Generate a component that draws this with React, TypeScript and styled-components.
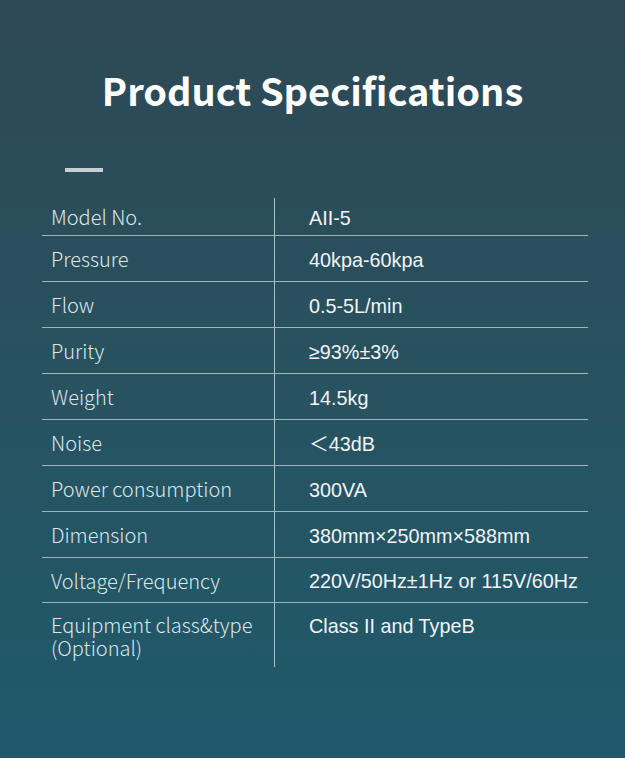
import React from "react";
import styled, { createGlobalStyle } from "styled-components";

const GlobalStyle = createGlobalStyle`
  html, body {
    margin: 0;
    padding: 0;
  }
  body {
    background: #1f5a6c;
  }
`;

const Page = styled.div`
  min-height: 758px;
  box-sizing: border-box;
  padding: 66px 0 0;
  background: linear-gradient(180deg, #2e4855 0%, #28525f 50%, #1f5a6c 100%);
  font-family: "Noto Sans CJK SC", "Noto Sans", sans-serif;
`;

const Title = styled.h1`
  margin: 0;
  text-align: center;
  color: #fff;
  font-family: "Noto Sans CJK SC", "Noto Sans", sans-serif;
  font-size: 38px;
  line-height: 48px;
  font-weight: 700;
`;

const Bar = styled.div`
  width: 38px;
  height: 4px;
  margin: 54px 0 0 65px;
  background: #c9ced3;
`;

const Table = styled.div`
  margin: 26px 0 0 42px;
  width: 546px;
`;

const Row = styled.div<{ $height: number; $last?: boolean }>`
  display: grid;
  grid-template-columns: 233px 1fr;
  min-height: ${(p) => p.$height}px;
  border-bottom: ${(p) => (p.$last ? "none" : "1px solid #9fb4bc")};
  align-items: stretch;
`;

const Label = styled.div<{ $top?: boolean }>`
  display: flex;
  flex-direction: column;
  justify-content: ${(p) => (p.$top ? "flex-start" : "center")};
  padding: ${(p) => (p.$top ? "10px 8px 0 9px" : "0 8px 0 9px")};
  border-right: 1px solid #aebfc6;
  color: #dfe6ea;
  font-family: "Noto Sans CJK SC", "Noto Sans", sans-serif;
  font-weight: 300;
  font-size: 20px;
  line-height: 25px;
`;

const LabelLine = styled.span`
  display: block;
  height: 23px;
  line-height: 23px;
`;

const Value = styled.div<{ $top?: boolean }>`
  display: flex;
  align-items: ${(p) => (p.$top ? "flex-start" : "center")};
  padding: ${(p) => (p.$top ? "11px 0 0 34px" : "2px 0 0 34px")};
  color: #f2f4f5;
  font-family: "Liberation Sans", Arial, "Noto Sans CJK SC", sans-serif;
  font-size: 19.8px;
  line-height: 24px;
`;

const specs: [string, string][] = [
  ["Model No.", "AII-5"],
  ["Pressure", "40kpa-60kpa"],
  ["Flow", "0.5-5L/min"],
  ["Purity", "≥93%±3%"],
  ["Weight", "14.5kg"],
  ["Noise", "＜43dB"],
  ["Power consumption", "300VA"],
  ["Dimension", "380mm×250mm×588mm"],
  ["Voltage/Frequency", "220V/50Hz±1Hz or 115V/60Hz"],
];

export default function App() {
  return (
    <>
      <GlobalStyle />
      <Page>
        <Title>Product Specifications</Title>
        <Bar />
        <Table>
          {specs.map(([label, value], i) => (
            <Row key={label} $height={i === 0 ? 37 : i === specs.length - 1 ? 44 : 45}>
              <Label>{label}</Label>
              <Value>{value}</Value>
            </Row>
          ))}
          <Row $height={64} $last>
            <Label $top>
              <LabelLine>Equipment class&amp;type</LabelLine>
              <LabelLine>(Optional)</LabelLine>
            </Label>
            <Value $top>Class II and TypeB</Value>
          </Row>
        </Table>
      </Page>
    </>
  );
}
